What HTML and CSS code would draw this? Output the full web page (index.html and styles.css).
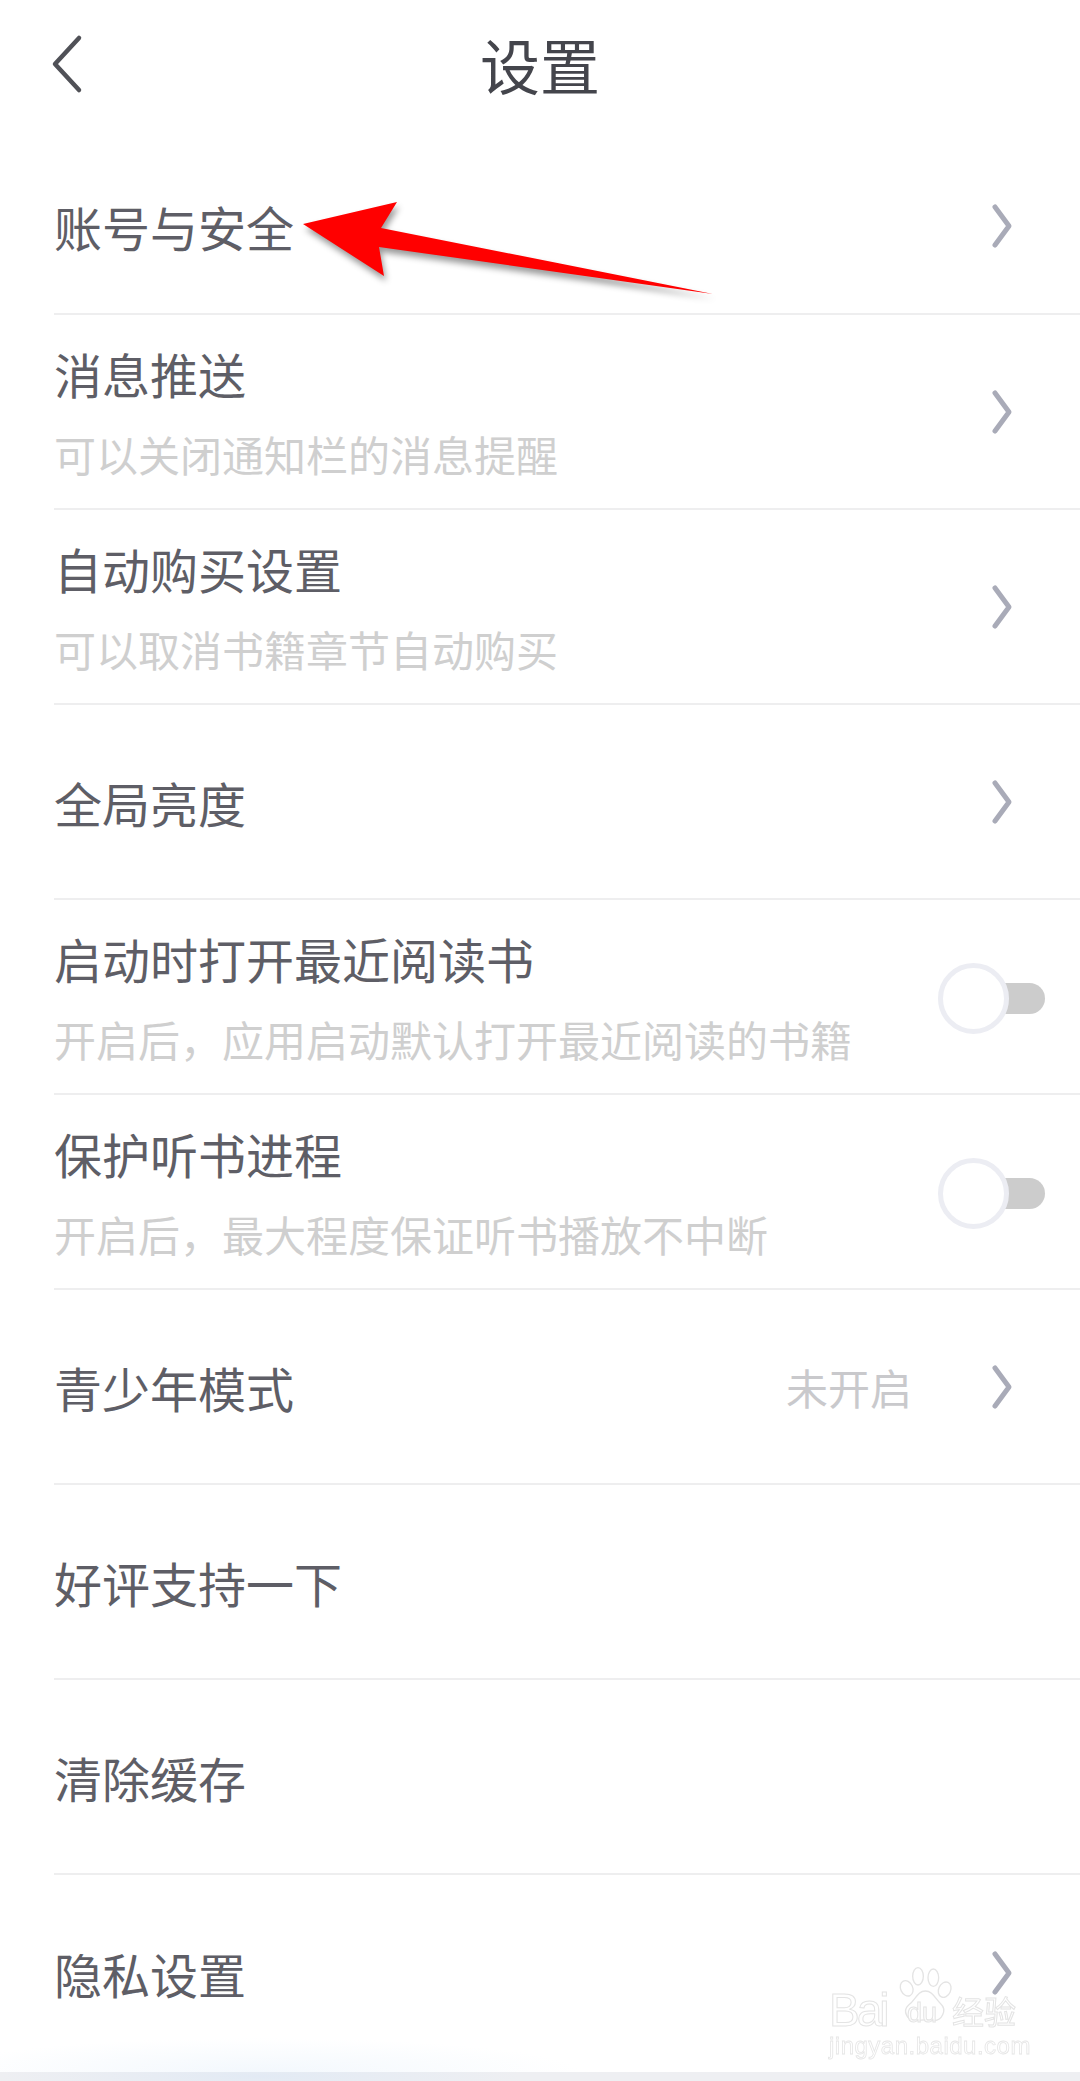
FILE: index.html
```html
<!DOCTYPE html>
<html lang="zh-CN">
<head>
    <meta charset="UTF-8">
    <title>设置</title>
    <link rel="stylesheet" href="styles.css">
</head>
<body>

    <div class="page">
        <!-- 顶部标题栏 -->
        <div class="header">
            <svg class="back" width="40" height="64" viewBox="0 0 40 64">
                <path d="M30 6 L6 32 L30 58"/>
            </svg>
            <div class="header-title">设置</div>
        </div>

        <div class="list">
            <div class="row row-first">
                <div class="row-text"><div class="row-title">账号与安全</div></div>
                <svg class="more" width="24" height="48" viewBox="0 0 24 48"><path d="M6 5 L20 24 L6 43"/></svg>
            </div>
            <div class="row">
                <div class="row-text">
                    <div class="row-title">消息推送</div>
                    <div class="row-sub">可以关闭通知栏的消息提醒</div>
                </div>
                <svg class="more" width="24" height="48" viewBox="0 0 24 48"><path d="M6 5 L20 24 L6 43"/></svg>
            </div>
            <div class="row">
                <div class="row-text">
                    <div class="row-title">自动购买设置</div>
                    <div class="row-sub">可以取消书籍章节自动购买</div>
                </div>
                <svg class="more" width="24" height="48" viewBox="0 0 24 48"><path d="M6 5 L20 24 L6 43"/></svg>
            </div>
            <div class="row">
                <div class="row-text"><div class="row-title">全局亮度</div></div>
                <svg class="more" width="24" height="48" viewBox="0 0 24 48"><path d="M6 5 L20 24 L6 43"/></svg>
            </div>
            <div class="row row-switch">
                <div class="row-text">
                    <div class="row-title">启动时打开最近阅读书</div>
                    <div class="row-sub">开启后，应用启动默认打开最近阅读的书籍</div>
                </div>
                <div class="switch"><span class="knob"></span></div>
            </div>
            <div class="row row-switch">
                <div class="row-text">
                    <div class="row-title">保护听书进程</div>
                    <div class="row-sub">开启后，最大程度保证听书播放不中断</div>
                </div>
                <div class="switch"><span class="knob"></span></div>
            </div>
            <div class="row">
                <div class="row-text"><div class="row-title">青少年模式</div></div>
                <div class="row-value">未开启</div>
                <svg class="more" width="24" height="48" viewBox="0 0 24 48"><path d="M6 5 L20 24 L6 43"/></svg>
            </div>
            <div class="row">
                <div class="row-text"><div class="row-title">好评支持一下</div></div>
            </div>
            <div class="row">
                <div class="row-text"><div class="row-title">清除缓存</div></div>
            </div>
            <div class="row row-last">
                <div class="row-text"><div class="row-title">隐私设置</div></div>
                <svg class="more" width="24" height="48" viewBox="0 0 24 48"><path d="M6 5 L20 24 L6 43"/></svg>
            </div>
        </div>

        <div class="bottom-bar"></div>

        <!-- 红色箭头标注 -->
        <svg class="arrow" width="1080" height="340" viewBox="0 0 1080 340">
            <polygon points="303,224 397,202 381,228 713,294 379,247 384,276"/>
        </svg>

        <!-- 右下角水印 -->
        <div class="mark">
            <svg class="mark-paw" width="60" height="62" viewBox="0 0 90 90">
                <ellipse cx="19" cy="32" rx="9" ry="12" transform="rotate(-25 19 32)"/>
                <ellipse cx="36" cy="14" rx="8" ry="13"/>
                <ellipse cx="59" cy="16" rx="8" ry="13"/>
                <ellipse cx="76" cy="34" rx="9" ry="12" transform="rotate(25 76 34)"/>
                <path d="M47 36 C58 36 62 48 70 55 C80 64 72 82 58 80 C50 79 42 79 34 80 C20 82 12 66 22 57 C32 50 35 36 47 36 Z"/>
            </svg>
            <div class="mark-top"><span class="mark-bai">Bai</span><span class="mark-du">du</span><span class="mark-cn">经验</span></div>
            <div class="mark-url">jingyan.baidu.com</div>
        </div>
    </div>

</body>
</html>
```

FILE: styles.css
```css
*{
    padding: 0;
    margin: 0;
    box-sizing: border-box;
}
body{
    background-color: #fff;
    font-family: "Noto Sans CJK SC", "Liberation Sans", sans-serif;
}
.page{
    width: 1080px;
    height: 2081px;
    position: relative;
    overflow: hidden;
    display: flex;
    flex-direction: column;
}

/* 标题栏 */
.header{
    height: 120px;
    flex: none;
    display: flex;
    align-items: flex-start;
    justify-content: center;
    position: relative;
}
.header-title{
    font-size: 60px;
    line-height: 60px;
    padding-top: 34px;
    color: #44454c;
    height: 120px;
}
.back{
    position: absolute;
    left: 49px;
    top: 32px;
}
.back path{
    fill: none;
    stroke: #505157;
    stroke-width: 4.5;
    stroke-linecap: round;
    stroke-linejoin: round;
}

/* 列表 */
.list{
    flex: 1;
    background: radial-gradient(ellipse 320px 34px at 260px 100%, #f3f8fd, rgba(255,255,255,0));
}
.row{
    height: 195px;
    margin-left: 54px;
    padding-right: 67px;
    border-bottom: 2px solid #eeeeef;
    display: flex;
    align-items: center;
}
.row-first{
    padding-top: 19px;
}
.row-last{
    border-bottom: none;
}
.row-switch{
    padding-right: 35px;
}
.row-text{
    flex: 1;
}
.row-title{
    font-size: 48px;
    line-height: 60px;
    color: #5e5e66;
}
.row-sub{
    font-size: 42px;
    line-height: 60px;
    margin-top: 21px;
    margin-bottom: -3px;
    color: #cfcfcf;
}
.row-value{
    font-size: 42px;
    color: #c9c9cc;
    margin-right: 77px;
}
.more{
    flex: none;
}
.more path{
    fill: none;
    stroke: #a9abb8;
    stroke-width: 5;
    stroke-linecap: round;
    stroke-linejoin: round;
}

/* 开关 */
.switch{
    width: 107px;
    height: 71px;
    margin-top: 3px;
    position: relative;
}
.switch::before{
    content: "";
    position: absolute;
    right: 0;
    top: 20px;
    width: 60px;
    height: 31px;
    border-radius: 16px;
    background-color: #cccccc;
}
.knob{
    position: absolute;
    left: 0;
    top: 0;
    width: 71px;
    height: 71px;
    border-radius: 50%;
    border: 5px solid #ecedf3;
    background-color: #fff;
}

.bottom-bar{
    height: 9px;
    flex: none;
    background: radial-gradient(ellipse 260px 20px at 260px 50%, #e2eaf4, #eeeff2);
}

/* 箭头 */
.arrow{
    position: absolute;
    left: 0;
    top: 0;
    filter: drop-shadow(2px 5px 3px rgba(0,0,0,0.4));
}
.arrow polygon{
    fill: #ff0000;
}

/* 水印 */
.mark{
    position: absolute;
    left: 828px;
    top: 1964px;
    width: 200px;
    height: 96px;
    filter: blur(0.4px);
}
.mark-paw{
    position: absolute;
    left: 66px;
    top: 2px;
}
.mark-paw ellipse,
.mark-paw path{
    fill: rgba(255,255,255,0.6);
    stroke: #e4e4e4;
    stroke-width: 2;
}
.mark-top{
    position: absolute;
    left: 0;
    top: 26px;
    width: 200px;
    height: 40px;
    color: rgba(255,255,255,0.7);
    -webkit-text-stroke: 1px #e4e4e4;
    font-family: "Liberation Sans", sans-serif;
}
.mark-bai{
    position: absolute;
    left: 1px;
    top: 0;
    font-size: 46px;
    line-height: 40px;
    letter-spacing: -3px;
}
.mark-du{
    position: absolute;
    left: 79px;
    top: 6px;
    font-size: 27px;
    line-height: 34px;
}
.mark-cn{
    position: absolute;
    left: 124px;
    top: 0;
    font-size: 32px;
    line-height: 40px;
    font-family: "Noto Sans CJK SC", sans-serif;
}
.mark-url{
    position: absolute;
    left: 1px;
    top: 68px;
    font-family: "Liberation Sans", sans-serif;
    font-size: 24px;
    line-height: 28px;
    letter-spacing: 0.5px;
    color: rgba(255,255,255,0.7);
    -webkit-text-stroke: 0.8px #e6e6e6;
}
```
